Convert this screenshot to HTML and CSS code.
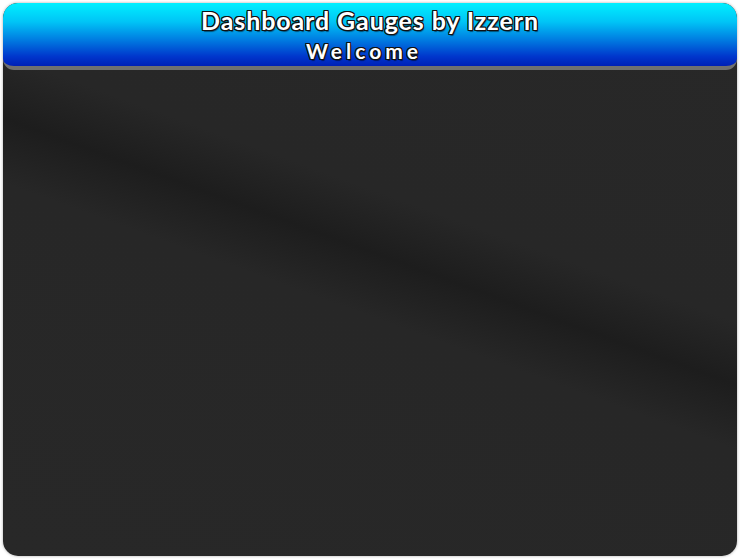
FILE: index.html
```html
<!DOCTYPE html>
<html>
<head>
<meta charset="utf-8">
<link rel="stylesheet" href="styles.css">
</head>
<body>
<div class="panel">
  <header class="header">
    <div class="title">Dashboard Gauges by Izzern</div>
    <div class="subtitle">Welcome</div>
  </header>
  <main class="content"></main>
</div>
</body>
</html>
```

FILE: styles.css
```css
html, body {
  margin: 0;
  padding: 0;
  background: #ffffff;
}
body {
  padding: 3px;
  width: 740px;
  height: 560px;
  box-sizing: border-box;
}
.panel {
  width: 734px;
  height: 553px;
  border-radius: 15px;
  overflow: hidden;
  box-shadow: 0 0 3px rgba(0,0,0,0.35);
  background: linear-gradient(200deg, #282828 0, #272727 300px, #1d1d1d 359px, #272727 420px, #282828 100%);
  display: flex;
  flex-direction: column;
}
.header {
  height: 63px;
  border-bottom: 4px solid #707070;
  border-radius: 14px 14px 11px 11px;
  background: linear-gradient(180deg, #00f0ff 0%, #00c4f6 30%, #0078e0 60%, #0036cc 85%, #0020b6 100%);
  display: flex;
  flex-direction: column;
  align-items: center;
  font-family: "Lato", "DejaVu Sans", sans-serif;
  font-weight: bold;
  color: #ffffff;
  text-shadow:
    -1px -1px 0 #111, 1px -1px 0 #111, -1px 1px 0 #111, 1px 1px 0 #111,
    0 -1px 0 #111, 0 1px 0 #111, -1px 0 0 #111, 1px 0 0 #111,
    1px 2px 1px rgba(0,0,0,0.5);
}
.title {
  font-size: 25px;
  line-height: 28px;
  letter-spacing: 0.9px;
  margin-top: 3px;
}
.subtitle {
  font-size: 21px;
  line-height: 24px;
  letter-spacing: 4px;
  margin-top: 5px;
  padding-right: 12px;
}
.content {
  flex: 1;
}
```
